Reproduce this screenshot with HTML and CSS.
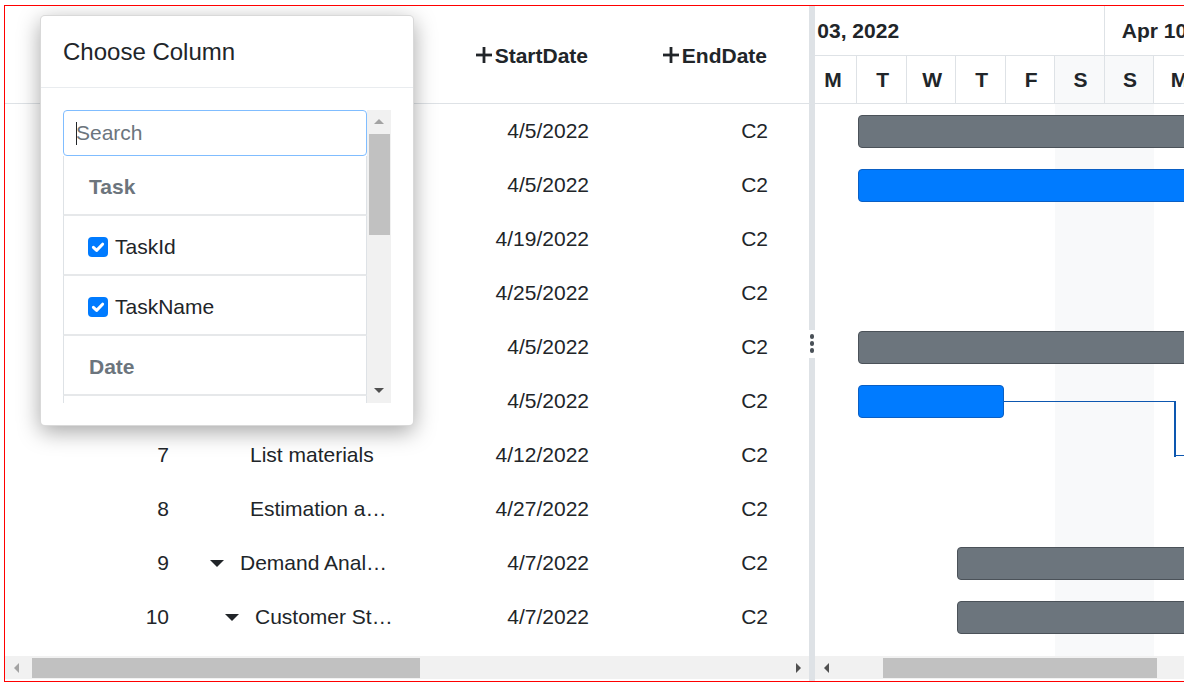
FILE: index.html
```html
<!DOCTYPE html>
<html>
<head>
<meta charset="utf-8">
<title>Gantt - Choose Column</title>
<link rel="stylesheet" href="styles.css">
</head>
<body>
<div class="gantt">
  <div class="grid-pane">
    <div class="grid-head">
      <div class="hc r">TaskId</div>
      <div class="hc">TaskName</div>
      <div class="hc r hc-date"><svg class="plus" width="16" height="16" viewBox="0 0 16 16"><rect x="0" y="6.6" width="16" height="2.8" fill="#212529"/><rect x="6.6" y="0" width="2.8" height="16" fill="#212529"/></svg>StartDate</div>
      <div class="hc r hc-date"><svg class="plus" width="16" height="16" viewBox="0 0 16 16"><rect x="0" y="6.6" width="16" height="2.8" fill="#212529"/><rect x="6.6" y="0" width="2.8" height="16" fill="#212529"/></svg>EndDate</div>
      <div class="hc"></div>
    </div>
    <div class="grid-body">
      <div class="row"><div class="cell r">1</div><div class="cell name"><span class="arrow"></span><span class="txt">Project initiation</span></div><div class="cell r">4/5/2022</div><div class="cell r">C2</div><div class="cell"></div></div>
      <div class="row"><div class="cell r">2</div><div class="cell name"><span class="txt leaf1">Identify site location</span></div><div class="cell r">4/5/2022</div><div class="cell r">C2</div><div class="cell"></div></div>
      <div class="row"><div class="cell r">3</div><div class="cell name"><span class="txt leaf1">Perform soil test</span></div><div class="cell r">4/19/2022</div><div class="cell r">C2</div><div class="cell"></div></div>
      <div class="row"><div class="cell r">4</div><div class="cell name"><span class="txt leaf1">Soil test approval</span></div><div class="cell r">4/25/2022</div><div class="cell r">C2</div><div class="cell"></div></div>
      <div class="row"><div class="cell r">5</div><div class="cell name"><span class="arrow"></span><span class="txt">Project estimation</span></div><div class="cell r">4/5/2022</div><div class="cell r">C2</div><div class="cell"></div></div>
      <div class="row"><div class="cell r">6</div><div class="cell name"><span class="txt leaf1">Develop floor plan</span></div><div class="cell r">4/5/2022</div><div class="cell r">C2</div><div class="cell"></div></div>
      <div class="row"><div class="cell r">7</div><div class="cell name"><span class="txt leaf1">List materials</span></div><div class="cell r">4/12/2022</div><div class="cell r">C2</div><div class="cell"></div></div>
      <div class="row"><div class="cell r">8</div><div class="cell name"><span class="txt leaf1">Estimation approval</span></div><div class="cell r">4/27/2022</div><div class="cell r">C2</div><div class="cell"></div></div>
      <div class="row"><div class="cell r">9</div><div class="cell name"><span class="arrow"></span><span class="txt">Demand Analysis</span></div><div class="cell r">4/7/2022</div><div class="cell r">C2</div><div class="cell"></div></div>
      <div class="row"><div class="cell r">10</div><div class="cell name"><span class="arrow lvl1"></span><span class="txt">Customer Strength</span></div><div class="cell r">4/7/2022</div><div class="cell r">C2</div><div class="cell"></div></div>
    </div>
    <div class="hscroll">
      <div class="sb-btn"><span class="tri-left off"></span></div>
      <div class="thumb grid-thumb"></div>
      <div class="sb-fill"></div>
      <div class="sb-btn"><span class="tri-right"></span></div>
    </div>
  </div>

  <div class="splitter"><div class="handle"><i></i><i></i><i></i></div></div>

  <div class="chart-pane">
    <div class="chart-head">
      <div class="timeline">
        <div class="weeks">
          <div class="wk">Apr 03, 2022</div>
          <div class="wk">Apr 10, 2022</div>
        </div>
        <div class="days">
          <div class="day we">S</div><div class="day">M</div><div class="day">T</div><div class="day">W</div><div class="day">T</div><div class="day">F</div><div class="day we">S</div>
          <div class="day we">S</div><div class="day">M</div><div class="day">T</div><div class="day">W</div><div class="day">T</div><div class="day">F</div><div class="day we">S</div>
        </div>
      </div>
    </div>
    <div class="chart-body">
      <div class="weekend" style="left:240.3px;width:99px"></div>
      <div class="bar parent" style="left:43px;top:11px;width:520px"></div>
      <div class="bar child" style="left:43px;top:65px;width:520px"></div>
      <div class="bar parent" style="left:43px;top:227px;width:520px"></div>
      <div class="bar child" style="left:43px;top:281px;width:146px"></div>
      <div class="conn" style="left:189px;top:297px;width:172px;height:1px"></div>
      <div class="conn" style="left:359px;top:298px;width:2px;height:55px"></div>
      <div class="conn" style="left:359px;top:351px;width:60px;height:1px"></div>
      <div class="bar parent" style="left:142px;top:443px;width:520px"></div>
      <div class="bar parent" style="left:142px;top:497px;width:520px"></div>
    </div>
    <div class="hscroll">
      <div class="sb-btn"><span class="tri-left"></span></div>
      <div class="thumb chart-thumb"></div>
      <div class="sb-fill"></div>
    </div>
  </div>

  <div class="dialog">
    <div class="dlg-head">Choose Column</div>
    <div class="dlg-body">
      <div class="dlg-list">
        <div class="search-wrap">
          <input class="search" type="text" placeholder="Search" autofocus>
          <span class="caret"></span>
        </div>
        <ul class="cols">
          <li class="grp">Task</li>
          <li class="opt"><span class="cb"><svg width="20" height="20" viewBox="0 0 20 20"><path d="M5.4 10.4 L8.6 13.4 L14.6 7.2" fill="none" stroke="#fff" stroke-width="3" stroke-linecap="round" stroke-linejoin="round"/></svg></span>TaskId</li>
          <li class="opt"><span class="cb"><svg width="20" height="20" viewBox="0 0 20 20"><path d="M5.4 10.4 L8.6 13.4 L14.6 7.2" fill="none" stroke="#fff" stroke-width="3" stroke-linecap="round" stroke-linejoin="round"/></svg></span>TaskName</li>
          <li class="grp">Date</li>
          <li class="opt"><span class="cb"><svg width="20" height="20" viewBox="0 0 20 20"><path d="M5.4 10.4 L8.6 13.4 L14.6 7.2" fill="none" stroke="#fff" stroke-width="3" stroke-linecap="round" stroke-linejoin="round"/></svg></span>StartDate</li>
        </ul>
      </div>
      <div class="vscroll">
        <span class="tri-up"></span>
        <div class="vthumb"></div>
        <div class="sb-fill"></div>
        <span class="tri-down"></span>
      </div>
    </div>
  </div>
</div>
</body>
</html>
```

FILE: styles.css
```css
html, body {
  margin: 0;
  padding: 0;
  overflow: hidden;
  background: #fff;
}

.gantt {
  position: relative;
  margin: 5px 0 0 4px;
  width: 1220px;
  height: 677px;
  box-sizing: border-box;
  border: 1px solid #ff0000;
  display: flex;
  overflow: hidden;
  font-family: "Liberation Sans", Arial, sans-serif;
  font-size: 21px;
  color: #212529;
}

/* ---------- grid pane ---------- */
.grid-pane {
  width: 804px;
  flex: none;
  display: flex;
  flex-direction: column;
  overflow: hidden;
}

.grid-head {
  flex: none;
  height: 98px;
  box-sizing: border-box;
  border-bottom: 1px solid #dee2e6;
  display: grid;
  grid-template-columns: 185px 223px 197px 179px 100px;
  align-items: center;
  font-weight: bold;
}

.hc {
  padding: 0 21px;
  white-space: nowrap;
  overflow: hidden;
}

.hc-date {
  padding-right: 22px;
  padding-top: 2px;
}

.plus {
  margin-right: 3px;
  vertical-align: 0px;
}

.r {
  text-align: right;
}

.grid-body {
  flex: 1;
}

.row {
  display: grid;
  grid-template-columns: 185px 223px 197px 179px 100px;
  height: 54px;
  align-items: center;
}

.cell {
  padding: 0 21px;
  white-space: nowrap;
  overflow: hidden;
  text-overflow: ellipsis;
}

.cell.name {
  display: flex;
  align-items: center;
  padding: 0 18px 0 20px;
}

.cell.name .txt {
  min-width: 0;
  overflow: hidden;
  text-overflow: ellipsis;
  white-space: nowrap;
}

.arrow {
  flex: none;
  width: 0;
  height: 0;
  border-left: 7px solid transparent;
  border-right: 7px solid transparent;
  border-top: 7px solid #212529;
  margin-right: 16px;
}

.arrow.lvl1 {
  margin-left: 15px;
}

.txt.leaf1 {
  margin-left: 40px;
}

/* ---------- scrollbars ---------- */
.hscroll {
  flex: none;
  height: 23px;
  margin-bottom: 2px;
  background: #f1f1f1;
  display: flex;
  align-items: center;
}

.sb-btn {
  width: 22px;
  height: 23px;
  flex: none;
  display: flex;
  align-items: center;
  justify-content: center;
}

.sb-fill {
  flex: 1;
}

.thumb {
  height: 20px;
  background: #c1c1c1;
  flex: none;
}

.grid-thumb {
  margin-left: 5px;
  width: 388px;
}

.chart-thumb {
  margin-left: 46px;
  width: 274px;
}

.tri-left {
  width: 0;
  height: 0;
  border-top: 5px solid transparent;
  border-bottom: 5px solid transparent;
  border-right: 5px solid #505050;
}

.tri-left.off {
  border-right-color: #a3a3a3;
}

.tri-right {
  width: 0;
  height: 0;
  border-top: 5px solid transparent;
  border-bottom: 5px solid transparent;
  border-left: 5px solid #505050;
}

/* ---------- splitter ---------- */
.splitter {
  width: 6px;
  flex: none;
  background: #dee2e6;
  display: flex;
  align-items: center;
  justify-content: center;
}

.handle {
  width: 6px;
  height: 28px;
  background: #fff;
  display: flex;
  flex-direction: column;
  align-items: center;
  justify-content: center;
  gap: 2.5px;
}

.handle i {
  width: 4.5px;
  height: 4.5px;
  border-radius: 50%;
  background: #495057;
}

/* ---------- chart pane ---------- */
.chart-pane {
  flex: 1;
  min-width: 0;
  display: flex;
  flex-direction: column;
  overflow: hidden;
}

.chart-head {
  flex: none;
  height: 98px;
  overflow: hidden;
}

.timeline {
  margin-left: -56.7px;
  width: 800px;
}

.weeks {
  display: flex;
  height: 50px;
  box-sizing: border-box;
  border-bottom: 1px solid #dee2e6;
}

.wk {
  flex: none;
  width: 346.5px;
  box-sizing: border-box;
  border-right: 1px solid #dee2e6;
  padding-left: 17px;
  display: flex;
  align-items: center;
  font-weight: bold;
  white-space: nowrap;
}

.days {
  display: flex;
  height: 48px;
  box-sizing: border-box;
  border-bottom: 1px solid #dee2e6;
}

.day {
  flex: none;
  width: 49.5px;
  box-sizing: border-box;
  border-right: 1px solid #dee2e6;
  display: flex;
  align-items: center;
  justify-content: center;
  padding-left: 2px;
  font-weight: bold;
}

.day.we {
  background: #f8f9fa;
}

.chart-body {
  flex: 1;
  position: relative;
  overflow: hidden;
}

.weekend {
  position: absolute;
  top: 0;
  bottom: 0;
  background: #f8f9fa;
}

.bar {
  position: absolute;
  height: 33px;
  box-sizing: border-box;
  border-radius: 4px;
}

.bar.parent {
  background: #6c757d;
  border: 1px solid #4b5259;
}

.bar.child {
  background: #007bff;
  border: 1px solid #0a5fc4;
}

.conn {
  position: absolute;
  background: #0d57b0;
}

/* ---------- dialog ---------- */
.dialog {
  position: absolute;
  left: 35px;
  top: 9px;
  width: 374px;
  box-sizing: border-box;
  background: #fff;
  border: 1px solid rgba(0, 0, 0, 0.15);
  border-radius: 5px;
  box-shadow: 0 6px 22px rgba(0, 0, 0, 0.35);
}

.dlg-head {
  height: 72px;
  box-sizing: border-box;
  border-bottom: 1px solid #e9ecef;
  padding: 0 22px;
  display: flex;
  align-items: center;
  font-size: 24px;
}

.dlg-body {
  padding: 22px 21px 22px 22px;
  display: flex;
}

.dlg-list {
  width: 304px;
  height: 293px;
  overflow: hidden;
  flex: none;
}

.search-wrap {
  position: relative;
}

.search {
  display: block;
  width: 304px;
  height: 46px;
  box-sizing: border-box;
  border: 1px solid #80bdff;
  border-radius: 4px;
  padding: 0 0 0 12px;
  margin: 0;
  font-family: "Liberation Sans", Arial, sans-serif;
  font-size: 21px;
  color: #212529;
  caret-color: transparent;
  outline: none;
}

.search::placeholder {
  color: #6c757d;
}

.caret {
  position: absolute;
  left: 13px;
  top: 12px;
  width: 1px;
  height: 23px;
  background: #212529;
}

.cols {
  list-style: none;
  margin: 0;
  padding: 0;
}

.cols li {
  height: 60px;
  box-sizing: border-box;
  border-left: 1px solid #dee2e6;
  border-right: 1px solid #dee2e6;
  border-bottom: 2px solid #e6e8ea;
  padding-top: 3px;
  display: flex;
  align-items: center;
}

.cols .grp {
  padding-left: 25px;
  font-weight: bold;
  color: #6c757d;
}

.cols .opt {
  padding-left: 24px;
}

.cb {
  width: 20px;
  height: 20px;
  border-radius: 4px;
  background: #007bff;
  margin-right: 7px;
  flex: none;
  display: flex;
}

.vscroll {
  width: 24px;
  height: 293px;
  flex: none;
  background: #f1f1f1;
  display: flex;
  flex-direction: column;
  align-items: center;
}

.tri-up {
  margin-top: 9px;
  width: 0;
  height: 0;
  border-left: 5px solid transparent;
  border-right: 5px solid transparent;
  border-bottom: 5px solid #a3a3a3;
}

.vthumb {
  margin-top: 10px;
  width: 21px;
  height: 101px;
  background: #c1c1c1;
}

.tri-down {
  margin-bottom: 10px;
  width: 0;
  height: 0;
  border-left: 5px solid transparent;
  border-right: 5px solid transparent;
  border-top: 5px solid #505050;
}
```
